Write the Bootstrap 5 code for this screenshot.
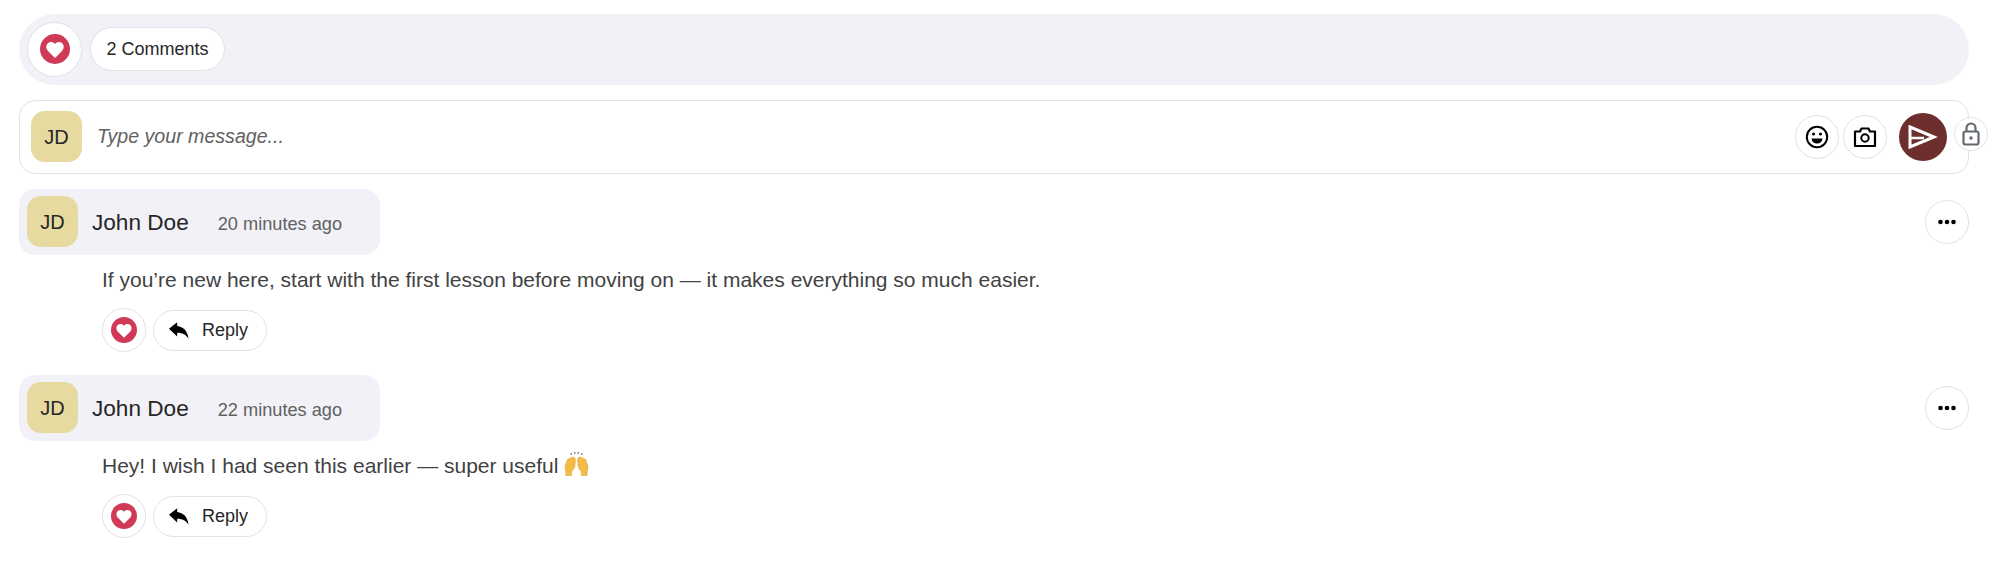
<!DOCTYPE html>
<html lang="en">
<head>
<meta charset="utf-8">
<title>Comments</title>
<link href="https://cdn.jsdelivr.net/npm/bootstrap@5.3.0/dist/css/bootstrap.min.css" rel="stylesheet">
<style>
body{font-family:"Liberation Sans",Arial,sans-serif;color:#212121;background:#fff;}
.wrap{padding:14px 31px 0 19px;}
.topbar{height:71px;background:#f1f1f7;border-radius:36px;padding:0 8px 1px;gap:8px;}
.round-btn{width:44px;height:44px;padding:0;border:1px solid #e2e2e2;border-radius:50%;background:#fff;flex:none;display:flex;align-items:center;justify-content:center;}
.round-big{width:55px;height:55px;}
.pill-btn{height:44px;padding:0 15.5px;border:1px solid #e2e2e2;border-radius:22px;background:#fff;font-size:18px;color:#262626;display:flex;align-items:center;}
.composer{height:74px;margin-top:15px;border:1px solid #e2e2e2;border-radius:16px;padding:0 21px 1px 11px;position:relative;}
.avatar-tile{width:51px;height:51px;border-radius:14px;background:#e6daa0;font-size:20px;color:#262626;flex:none;display:flex;align-items:center;justify-content:center;}
.hint{margin-left:15px;font-size:19.6px;font-style:italic;color:#616161;flex:1;}
.send-btn{width:48px;height:48px;border-radius:50%;background:#6d2e2e;border:0;padding:0;margin-left:12px;display:flex;align-items:center;justify-content:center;}
.lock-btn{position:absolute;right:-20px;top:16px;width:34px;height:34px;border:1px solid #e2e2e2;border-radius:50%;background:#fff;display:flex;align-items:center;justify-content:center;padding:0;}
.entry{margin-top:15px;height:171px;}
.who{width:361px;height:66px;background:#f1f1f7;border-radius:16px;padding:0 8px 1px;}
.who-name{margin:3px 0 0 14px;font-size:22.6px;color:#262626;}
.who-time{margin:7px 0 0 29px;font-size:18.2px;color:#616161;}
.dots{margin-top:11px;}
.msg{margin:10px 0 0 83px;font-size:21px;line-height:30px;color:#424242;}
.acts{margin:13px 0 0 83px;gap:7px;}
.reply-pill{height:41px;width:114px;padding:0 0 0 15px;font-size:18px;gap:13px;}
.gap4{gap:4px;}
.hands{vertical-align:-3px;}
</style>
</head>
<body>
<svg width="0" height="0" class="position-absolute">
<defs>
<symbol id="ic-heart" viewBox="0 0 30 30"><circle cx="15" cy="15" r="15" fill="#d03a56"/><path d="M15 24 8 17C4.600 13.500 6.500 8 11 8 12.600 8 14.100 8.700 15 10 15.900 8.700 17.400 8 19 8 23.500 8 25.400 13.500 22 17Z" fill="#fff"/></symbol>
<symbol id="ic-reply" viewBox="0 0 22 18"><path d="M0 7 9 0V4C15.500 4.800 20.500 9 21.500 18 18.800 13.800 15 11.500 9 11.500V15.500Z" fill="#000"/></symbol>
</defs>
</svg>
<div class="wrap">
  <div class="topbar d-flex align-items-center">
    <button class="round-btn round-big" type="button"><svg width="30" height="30"><use href="#ic-heart"/></svg></button>
    <button class="pill-btn" type="button">2 Comments</button>
  </div>

  <div class="composer d-flex align-items-center">
    <div class="avatar-tile">JD</div>
    <div class="hint">Type your message...</div>
    <div class="d-flex align-items-center gap4">
      <button class="round-btn" type="button" aria-label="Emoji"><svg width="24" height="24" viewBox="0 0 24 24" fill="none"><circle cx="12" cy="12" r="10.200" stroke="#000" stroke-width="2"/><circle cx="8.500" cy="9" r="1.500" fill="#000"/><circle cx="15.500" cy="9" r="1.500" fill="#000"/><path d="M6.500 13.500H17.500C17.200 16.800 15 18.500 12 18.500S6.800 16.800 6.500 13.500Z" fill="#000"/></svg></button>
      <button class="round-btn" type="button" aria-label="Camera"><svg width="24" height="24" viewBox="0 0 24 24" fill="none"><path d="M2 6.500H7L8.500 3.500H15.500L17 6.500H22V21H2Z" stroke="#000" stroke-width="2.200" stroke-linejoin="round"/><circle cx="12" cy="13" r="3.700" stroke="#000" stroke-width="2"/></svg></button>
    </div>
    <button class="send-btn" type="button" aria-label="Send"><svg width="30" height="24" viewBox="0 0 30 24" fill="none"><path d="M2 2 26 12 2 22Z" stroke="#fff" stroke-width="3"/><path d="M2 13H16" stroke="#fff" stroke-width="2.500"/></svg></button>
    <button class="lock-btn" type="button" aria-label="Private"><svg width="18" height="24" viewBox="0 0 18 24" fill="none"><rect x="1.500" y="9.500" width="15" height="13" rx="2" stroke="#636a72" stroke-width="2.200"/><path d="M4.500 9.500V6A4.500 4.500 0 0 1 13.500 6V9.500" stroke="#636a72" stroke-width="2.200"/><circle cx="9" cy="16" r="1.700" fill="#636a72"/></svg></button>
  </div>

  <div class="entry">
    <div class="d-flex justify-content-between align-items-start">
      <div class="who d-flex align-items-center">
        <div class="avatar-tile">JD</div>
        <span class="who-name">John Doe</span>
        <span class="who-time">20 minutes ago</span>
      </div>
      <button class="round-btn dots" type="button" aria-label="More"><svg width="20" height="6" viewBox="0 0 20 6"><circle cx="3.500" cy="3" r="2.300"/><circle cx="10" cy="3" r="2.300"/><circle cx="16.500" cy="3" r="2.300"/></svg></button>
    </div>
    <p class="msg">If you’re new here, start with the first lesson before moving on — it makes everything so much easier.</p>
    <div class="acts d-flex align-items-center">
      <button class="round-btn" type="button"><svg width="26" height="26"><use href="#ic-heart"/></svg></button>
      <button class="pill-btn reply-pill" type="button"><svg width="20" height="17"><use href="#ic-reply"/></svg>Reply</button>
    </div>
  </div>

  <div class="entry">
    <div class="d-flex justify-content-between align-items-start">
      <div class="who d-flex align-items-center">
        <div class="avatar-tile">JD</div>
        <span class="who-name">John Doe</span>
        <span class="who-time">22 minutes ago</span>
      </div>
      <button class="round-btn dots" type="button" aria-label="More"><svg width="20" height="6" viewBox="0 0 20 6"><circle cx="3.500" cy="3" r="2.300"/><circle cx="10" cy="3" r="2.300"/><circle cx="16.500" cy="3" r="2.300"/></svg></button>
    </div>
    <p class="msg">Hey! I wish I had seen this earlier — super useful <svg width="25" height="25" viewBox="0 0 25 25" class="hands" role="img" aria-label="raising hands"><g fill="#f4bb45" stroke="#e09f2e" stroke-width=".5"><path d="M10.500 6.500C9.500 5.700 8 6 7.500 6.700 6.500 6.500 5.500 7 5.200 7.800 4 7.800 3.200 8.500 3 9.500L1.200 14.500C.9 16 1 17.500 1.500 18.500L2 24.500H7.500L7.800 20.500C8.300 19.300 10 18.300 10.600 16.500L11.500 10.500C11.600 9 11.300 7.500 10.500 6.500Z"/><path d="M14.500 6.500C15.500 5.700 17 6 17.500 6.700 18.500 6.500 19.500 7 19.800 7.800 21 7.800 21.800 8.500 22 9.500L23.800 14.500C24.100 16 24 17.500 23.500 18.500L23 24.500H17.500L17.200 20.500C16.700 19.300 15 18.300 14.400 16.500L13.500 10.500C13.400 9 13.700 7.500 14.500 6.500Z"/></g><g fill="#8a94a0"><rect x="6.500" y="2" width="1.500" height="2"/><rect x="10" y="1" width="1.500" height="2"/><rect x="13.500" y="1" width="1.500" height="2"/><rect x="17" y="2" width="1.500" height="2"/></g></svg></p>
    <div class="acts d-flex align-items-center">
      <button class="round-btn" type="button"><svg width="26" height="26"><use href="#ic-heart"/></svg></button>
      <button class="pill-btn reply-pill" type="button"><svg width="20" height="17"><use href="#ic-reply"/></svg>Reply</button>
    </div>
  </div>
</div>
</body>
</html>
